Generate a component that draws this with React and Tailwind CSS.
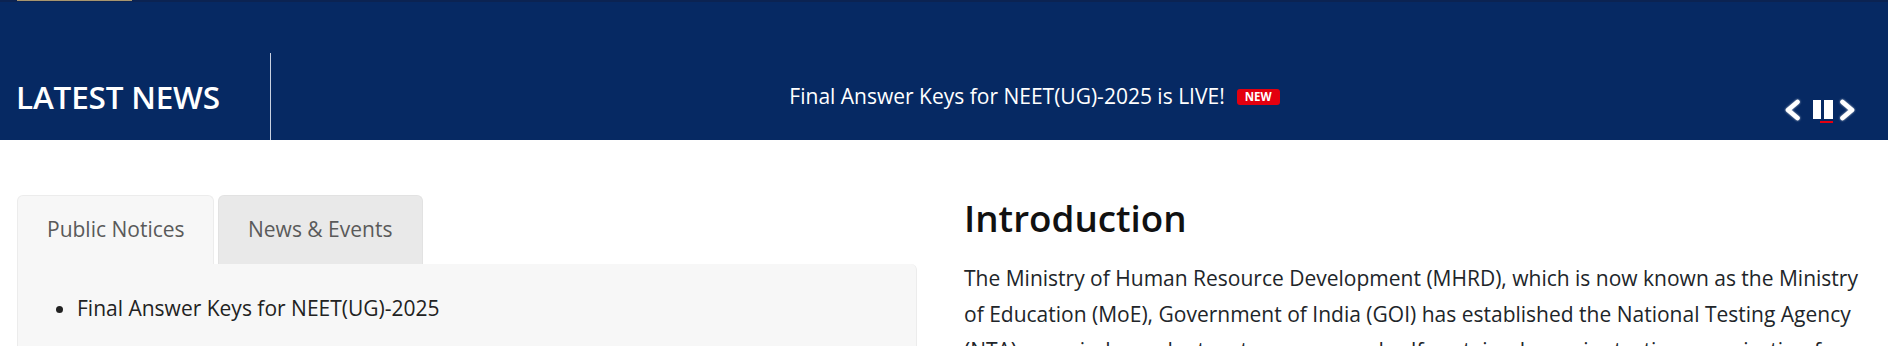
import React from "react";

function Chevron({ dir }) {
  return (
    <svg width="17" height="22" viewBox="0 0 17 22" className="drop-shadow-[0_0_1px_rgba(255,255,255,0.7)]">
      {dir === "left" ? (
        <polyline points="13.5,3 4,11 13.5,19" fill="none" stroke="#fff" strokeWidth="4.6" strokeLinecap="round" strokeLinejoin="round" />
      ) : (
        <polyline points="3.5,3 13,11 3.5,19" fill="none" stroke="#fff" strokeWidth="4.6" strokeLinecap="round" strokeLinejoin="round" />
      )}
    </svg>
  );
}

export default function App() {
  return (
    <div className="font-['Open_Sans',sans-serif] bg-white">
      {/* News bar */}
      <div className="bg-[#062963] h-[140px] flex flex-col">
        <div className="h-[2px] bg-[#0b2352] flex">
          <div className="ml-[17px] w-[115px] h-[1px] bg-[#a8966f]" />
        </div>
        <div className="h-[51px]" />
        <div className="flex h-[87px] items-center">
          <div className="w-[271px] h-full border-r border-[#c9d1e0] flex items-center pl-[16px]">
            <span className="text-white text-[31.5px] font-semibold tracking-[-0.2px]">LATEST NEWS</span>
          </div>
          <div className="flex-1 flex justify-center items-center pl-[14px]">
            <span className="text-white text-[21px]">Final Answer Keys for NEET(UG)-2025 is LIVE!</span>
            <span className="ml-[12px] bg-[#e3000f] text-white text-[11.5px] font-bold leading-none rounded-[3px] px-[8px] py-[2.5px] mt-[1px]">NEW</span>
          </div>
          <div className="w-[104px] flex items-center pt-[26px]">
            <Chevron dir="left" />
            <div className="flex gap-[3px] ml-[12px]">
              <div className="w-[8px] h-[19px] bg-white" />
              <div className="w-[9px] h-[19px] bg-white" />
            </div>
            <div className="ml-[6px] flex">
              <Chevron dir="right" />
            </div>
          </div>
        </div>
      </div>
      <div className="relative">
        <div className="absolute left-[1820px] top-[-19px] w-[13px] h-[2px] bg-[#e3000f]" />
      </div>

      {/* Content */}
      <div className="flex">
        <div className="w-[944px] pl-[17px] pr-[27px] pt-[55px]">
          <div className="flex gap-[4px]">
            <div className="w-[197px] h-[69px] bg-[#f7f7f7] border border-b-0 border-[#ececec] rounded-t-[6px] flex items-center pl-[29px] text-[21px] text-[#5a5a5a]">
              Public Notices
            </div>
            <div className="w-[205px] h-[69px] bg-[#e9e9e9] border border-b-0 border-[#e2e2e2] rounded-t-[6px] flex items-center pl-[29px] text-[21px] text-[#5a5a5a]">
              News &amp; Events
            </div>
          </div>
          <div className="bg-[#f7f7f7] border border-t-0 border-[#ececec] rounded-b-[6px] rounded-tr-[6px] h-[300px] pt-[26px] pl-[59px]">
            <ul className="list-disc text-[21px] leading-[36px] text-[#222]">
              <li>Final Answer Keys for NEET(UG)-2025</li>
            </ul>
          </div>
        </div>
        <div className="w-[906px] ml-[20px] pt-[56px]">
          <h2 className="text-[36.8px] font-semibold leading-[1.2] text-[#111]">Introduction</h2>
          <p className="mt-[20px] text-[21px] leading-[36px] text-[#212529]">
            The Ministry of Human Resource Development (MHRD), which is now known as the Ministry of Education (MoE), Government of India (GOI) has established the National Testing Agency (NTA) as an independent, autonomous and self-sustained premier testing organisation for conducting entrance examinations for admission/fellowship in higher educational institutions.
          </p>
        </div>
      </div>
    </div>
  );
}
